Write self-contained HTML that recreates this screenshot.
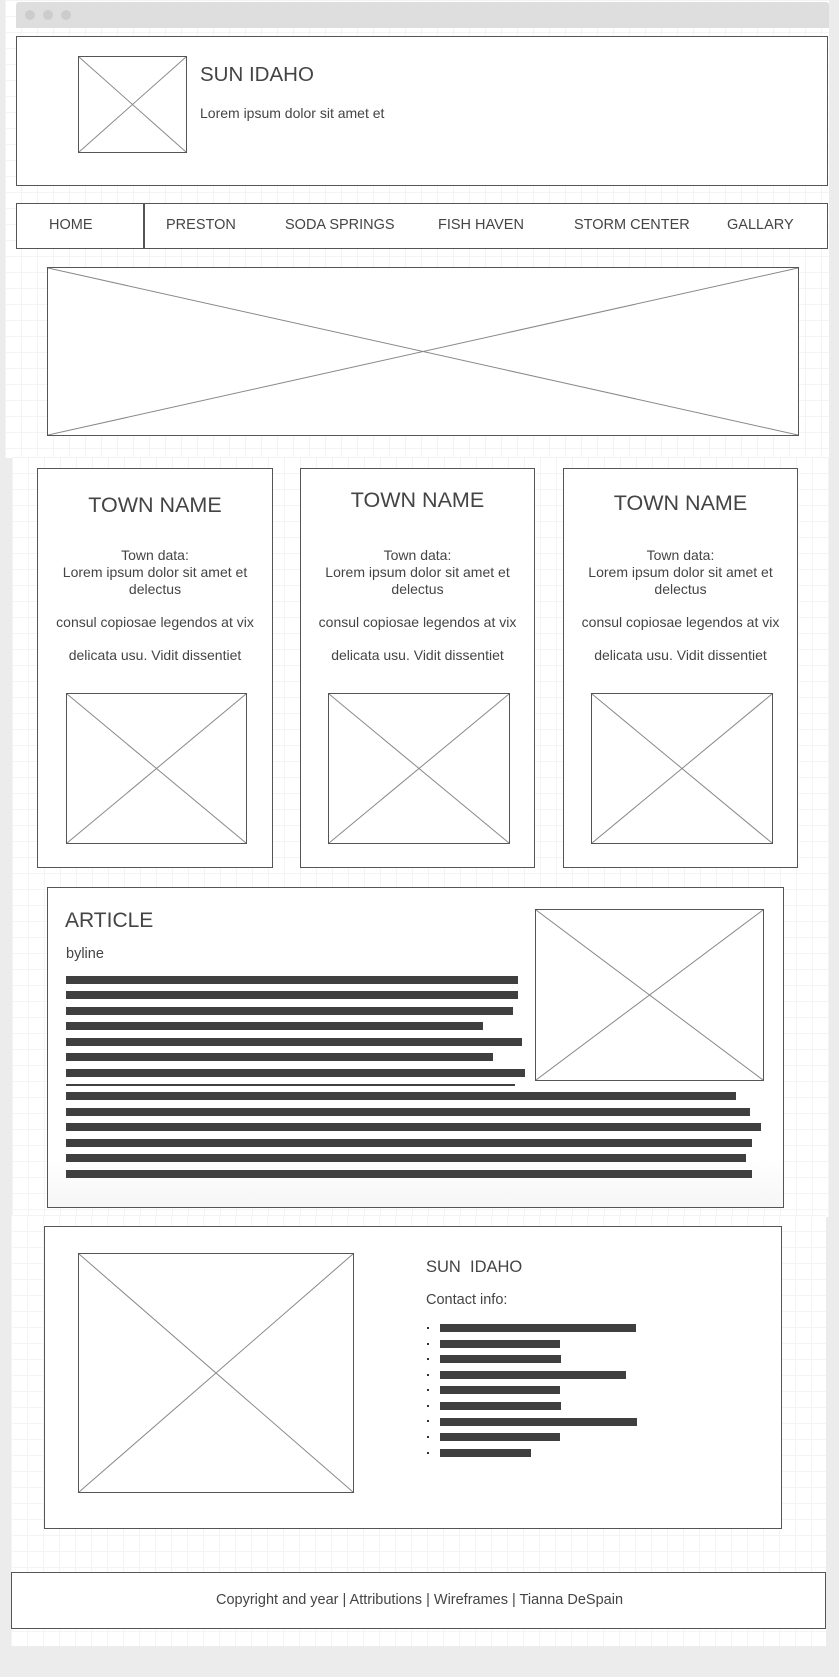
<!DOCTYPE html>
<html><head><meta charset="utf-8"><style>
*{margin:0;padding:0;box-sizing:border-box}
body{width:839px;height:1677px;background:#ececec;position:relative;overflow:hidden;font-family:"Liberation Sans",sans-serif;color:#444}
.grid{position:absolute;background-color:#fff;background-image:linear-gradient(#f4f4f4 1px,transparent 1px),linear-gradient(90deg,#f4f4f4 1px,transparent 1px);background-size:16px 16px}
.box{position:absolute;border:1.5px solid #555;background:#fff}
.img{position:absolute;border:1.5px solid #555;background:#fff}
.img svg{position:absolute;left:0;top:0;width:100%;height:100%}
.t{position:absolute;white-space:nowrap}
.bar{position:absolute;height:8px;background:#3f3f3f}
.nav{position:absolute;top:217px;font-size:14.5px}
.card .h{position:absolute;left:0;width:100%;text-align:center;font-size:21.5px}
.card .d{position:absolute;left:0;width:100%;text-align:center;font-size:14px;line-height:17px}
</style></head><body>
<div class="grid" style="left:5px;top:0;width:824px;height:458px"></div>
<div class="grid" style="left:12px;top:457px;width:817px;height:760px"></div>
<div class="grid" style="left:11px;top:1215px;width:815px;height:431px"></div>
<div style="position:absolute;left:16px;top:2px;width:813px;height:26px;background:#dedede;border-radius:3px 3px 0 0"></div>
<div style="position:absolute;left:25px;top:10px;width:10px;height:10px;border-radius:50%;background:#ccc"></div>
<div style="position:absolute;left:43px;top:10px;width:10px;height:10px;border-radius:50%;background:#ccc"></div>
<div style="position:absolute;left:61px;top:10px;width:10px;height:10px;border-radius:50%;background:#ccc"></div>

<div class="box" style="left:16px;top:36px;width:812px;height:150px"></div>
<div class="img" style="left:78px;top:56px;width:109px;height:97px"><svg viewBox="0 0 100 100" preserveAspectRatio="none"><path d="M0 0L100 100M100 0L0 100" stroke="#888" stroke-width="1" vector-effect="non-scaling-stroke"/></svg></div>
<div class="t" style="left:200px;top:63px;font-size:20.5px">SUN IDAHO</div>
<div class="t" style="left:200px;top:105px;font-size:14px">Lorem ipsum dolor sit amet et</div>

<div class="box" style="left:16px;top:203px;width:812px;height:46px"></div>
<div style="position:absolute;left:143px;top:203px;width:1.5px;height:46px;background:#555"></div>
<div class="nav t" style="left:49px">HOME</div>
<div class="nav t" style="left:166px">PRESTON</div>
<div class="nav t" style="left:285px">SODA SPRINGS</div>
<div class="nav t" style="left:438px">FISH HAVEN</div>
<div class="nav t" style="left:574px">STORM CENTER</div>
<div class="nav t" style="left:727px">GALLARY</div>

<div class="img" style="left:47px;top:267px;width:752px;height:169px"><svg viewBox="0 0 100 100" preserveAspectRatio="none"><path d="M0 0L100 100M100 0L0 100" stroke="#888" stroke-width="1" vector-effect="non-scaling-stroke"/></svg></div>

<div class="box card" style="left:37px;top:468px;width:236px;height:400px">
<div class="h" style="top:24px">TOWN NAME</div>
<div class="d" style="top:78px">Town data:<br>Lorem ipsum dolor sit amet et<br>delectus</div>
<div class="d" style="top:145px">consul copiosae legendos at vix</div>
<div class="d" style="top:178px">delicata usu. Vidit dissentiet</div>
</div>
<div class="box card" style="left:300px;top:468px;width:235px;height:400px">
<div class="h" style="top:19px">TOWN NAME</div>
<div class="d" style="top:78px">Town data:<br>Lorem ipsum dolor sit amet et<br>delectus</div>
<div class="d" style="top:145px">consul copiosae legendos at vix</div>
<div class="d" style="top:178px">delicata usu. Vidit dissentiet</div>
</div>
<div class="box card" style="left:563px;top:468px;width:235px;height:400px">
<div class="h" style="top:22px">TOWN NAME</div>
<div class="d" style="top:78px">Town data:<br>Lorem ipsum dolor sit amet et<br>delectus</div>
<div class="d" style="top:145px">consul copiosae legendos at vix</div>
<div class="d" style="top:178px">delicata usu. Vidit dissentiet</div>
</div>
<div class="img" style="left:66px;top:693px;width:181px;height:151px"><svg viewBox="0 0 100 100" preserveAspectRatio="none"><path d="M0 0L100 100M100 0L0 100" stroke="#888" stroke-width="1" vector-effect="non-scaling-stroke"/></svg></div>
<div class="img" style="left:328px;top:693px;width:182px;height:151px"><svg viewBox="0 0 100 100" preserveAspectRatio="none"><path d="M0 0L100 100M100 0L0 100" stroke="#888" stroke-width="1" vector-effect="non-scaling-stroke"/></svg></div>
<div class="img" style="left:591px;top:693px;width:182px;height:151px"><svg viewBox="0 0 100 100" preserveAspectRatio="none"><path d="M0 0L100 100M100 0L0 100" stroke="#888" stroke-width="1" vector-effect="non-scaling-stroke"/></svg></div>

<div class="box" style="left:47px;top:887px;width:737px;height:321px;background:linear-gradient(#fff 85%,#f6f6f6)"></div>
<div class="t" style="left:65px;top:909px;font-size:21px">ARTICLE</div>
<div class="t" style="left:66px;top:946px;font-size:14.5px">byline</div>
<div class="img" style="left:535px;top:909px;width:229px;height:172px"><svg viewBox="0 0 100 100" preserveAspectRatio="none"><path d="M0 0L100 100M100 0L0 100" stroke="#888" stroke-width="1" vector-effect="non-scaling-stroke"/></svg></div>
<div class="bar" style="left:66px;top:976px;width:452px"></div>
<div class="bar" style="left:66px;top:991px;width:452px"></div>
<div class="bar" style="left:66px;top:1007px;width:447px"></div>
<div class="bar" style="left:66px;top:1022px;width:417px"></div>
<div class="bar" style="left:66px;top:1038px;width:456px"></div>
<div class="bar" style="left:66px;top:1053px;width:427px"></div>
<div class="bar" style="left:66px;top:1069px;width:459px"></div>
<div class="bar" style="left:66px;top:1084px;width:449px;height:2px"></div>
<div class="bar" style="left:66px;top:1092px;width:670px"></div>
<div class="bar" style="left:66px;top:1108px;width:684px"></div>
<div class="bar" style="left:66px;top:1123px;width:695px"></div>
<div class="bar" style="left:66px;top:1139px;width:686px"></div>
<div class="bar" style="left:66px;top:1154px;width:680px"></div>
<div class="bar" style="left:66px;top:1170px;width:686px"></div>

<div class="box" style="left:44px;top:1226px;width:738px;height:303px"></div>
<div class="img" style="left:78px;top:1253px;width:276px;height:240px"><svg viewBox="0 0 100 100" preserveAspectRatio="none"><path d="M0 0L100 100M100 0L0 100" stroke="#888" stroke-width="1" vector-effect="non-scaling-stroke"/></svg></div>
<div class="t" style="left:426px;top:1258px;font-size:16.5px">SUN &nbsp;IDAHO</div>
<div class="t" style="left:426px;top:1292px;font-size:14.5px">Contact info:</div>
<div style="position:absolute;left:427px;top:1327px;width:2px;height:2px;background:#333;box-shadow:0 16px #333,0 31px #333,0 47px #333,0 62px #333,0 78px #333,0 93px #333,0 109px #333,0 125px #333"></div>
<div class="bar" style="left:440px;top:1324px;width:196px"></div>
<div class="bar" style="left:440px;top:1340px;width:120px"></div>
<div class="bar" style="left:440px;top:1355px;width:121px"></div>
<div class="bar" style="left:440px;top:1371px;width:186px"></div>
<div class="bar" style="left:440px;top:1386px;width:120px"></div>
<div class="bar" style="left:440px;top:1402px;width:121px"></div>
<div class="bar" style="left:440px;top:1418px;width:197px"></div>
<div class="bar" style="left:440px;top:1433px;width:120px"></div>
<div class="bar" style="left:440px;top:1449px;width:91px"></div>

<div class="box" style="left:11px;top:1572px;width:815px;height:57px"></div>
<div class="t" style="left:0;width:839px;text-align:center;top:1592px;font-size:14.5px">Copyright and year | Attributions | Wireframes | Tianna DeSpain</div>
</body></html>
